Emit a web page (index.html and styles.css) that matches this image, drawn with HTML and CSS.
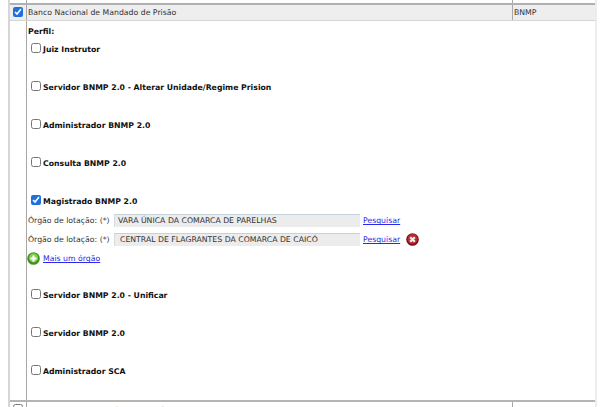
FILE: index.html
```html
<!DOCTYPE html>
<html lang="pt-BR">
<head>
<meta charset="utf-8">
<title>Sistemas</title>
<link rel="stylesheet" href="styles.css">
</head>
<body>
<div class="sheet">
  <div class="row stub">
    <div class="c-check"></div><div class="c-name"></div><div class="c-code"></div>
  </div>
  <div class="row head">
    <div class="c-check"><input type="checkbox" class="head-box" checked></div>
    <div class="c-name">Banco Nacional de Mandado de Prisão</div>
    <div class="c-code">BNMP</div>
  </div>
  <div class="row body">
    <div class="c-check"></div>
    <div class="c-main">
      <div class="perfil">Perfil:</div>
      <label class="item"><input type="checkbox"><span>Juiz Instrutor</span></label>
      <label class="item"><input type="checkbox"><span>Servidor BNMP 2.0 - Alterar Unidade/Regime Prision</span></label>
      <label class="item"><input type="checkbox"><span>Administrador BNMP 2.0</span></label>
      <label class="item"><input type="checkbox"><span>Consulta BNMP 2.0</span></label>
      <label class="item open"><input type="checkbox" checked><span>Magistrado BNMP 2.0</span></label>
      <div class="orgao">
        <span class="lbl">Órgão de lotação: (*)</span>
        <span class="field">VARA ÚNICA DA COMARCA DE PARELHAS</span>
        <a href="#" class="link">Pesquisar</a>
      </div>
      <div class="orgao">
        <span class="lbl">Órgão de lotação: (*)</span>
        <span class="field second">CENTRAL DE FLAGRANTES DA COMARCA DE CAICÓ</span>
        <a href="#" class="link">Pesquisar</a>
        <svg class="del" width="13" height="13" viewBox="0 0 13 13" aria-hidden="true"><circle cx="6.5" cy="6.5" r="6.3" fill="#7d121c"/><circle cx="6.5" cy="6" r="4.9" fill="#c02a34"/><path d="M4.2 4.2l4.6 4.6M8.8 4.2l-4.6 4.6" stroke="#f4f0f0" stroke-width="2.2"/></svg>
      </div>
      <div class="more">
        <svg width="13" height="13" viewBox="0 0 13 13" aria-hidden="true"><circle cx="6.5" cy="6.5" r="6.3" fill="#3f8f1f"/><circle cx="6.5" cy="5.8" r="4.6" fill="#7ed04a"/><path d="M6.5 3.4v6.2M3.4 6.5h6.2" stroke="#fff" stroke-width="2.2"/></svg>
        <a href="#" class="link">Mais um órgão</a>
      </div>
      <label class="item after"><input type="checkbox"><span>Servidor BNMP 2.0 - Unificar</span></label>
      <label class="item"><input type="checkbox"><span>Servidor BNMP 2.0</span></label>
      <label class="item"><input type="checkbox"><span>Administrador SCA</span></label>
    </div>
  </div>
  <div class="row next">
    <div class="c-check"><input type="checkbox" class="head-box"></div>
    <div class="c-name">Banco Nacional de Perícias e Custódia</div>
    <div class="c-code">BNPC</div>
  </div>
</div>
</body>
</html>
```
FILE: styles.css
```css
html, body {
  margin: 0;
  height: 407px;
  overflow: hidden;
  background: #fff;
}
body {
  font-family: "DejaVu Sans", Verdana, sans-serif;
  font-size: 7.75px;
  color: #333;
}
.sheet {
  width: 585px;
  height: 407px;
  margin-left: 8px;
  overflow: hidden;
  border-left: 2px solid #d6d6d6;
  border-right: 2px solid #ececec;
  box-sizing: content-box;
}
.row {
  display: flex;
}
.c-check {
  width: 16px;
  flex: none;
  border-right: 1px solid #a8a8a8;
  display: flex;
  justify-content: center;
}
.c-name {
  width: 486px;
  flex: none;
  padding-left: 1px;
  box-sizing: border-box;
  border-right: 1px solid #a8a8a8;
}
.c-code {
  flex: 1;
  padding-left: 1px;
}
.stub {
  height: 3px;
  border-bottom: 2px solid #b0b0b0;
}
.head {
  height: 15px;
  line-height: 15px;
  background: #eee;
  border-bottom: 1px solid #d4d4d4;
}
.head-box {
  width: 10px;
  height: 10px;
  margin: 2px 0 0;
  accent-color: #1f6fe0;
}
.body {
  height: 379px;
  border-bottom: 2px solid #b4b4b4;
}
.c-main {
  flex: 1;
  padding-left: 1px;
  color: #111;
}
.perfil {
  height: 22px;
  line-height: 21px;
  font-weight: bold;
}
.item {
  display: flex;
  align-items: flex-start;
  height: 37.9px;
  font-weight: bold;
  color: #111;
}
.item input {
  width: 10px;
  height: 10px;
  margin: 0 2px 0 3px;
  accent-color: #1f6fe0;
}
.item span {
  line-height: 13px;
}
.open {
  height: 16.9px;
}
.after {
  margin-top: 20.5px;
}
.orgao {
  display: flex;
  align-items: center;
  height: 19px;
  color: #333;
}
.lbl {
  width: 86px;
  flex: none;
  white-space: nowrap;
}
.field {
  width: 246px;
  height: 13px;
  line-height: 12px;
  padding-left: 3px;
  box-sizing: border-box;
  flex: none;
  background: #ececec;
  border-top: 1px solid #c6d2da;
  border-left: 1px solid #d4dce0;
  color: #333;
  white-space: nowrap;
  overflow: hidden;
}
.second {
  padding-left: 5px;
}
.link {
  color: #2a2ae8;
  margin-left: 3px;
}
.del {
  margin-left: 6px;
}
.more {
  display: flex;
  align-items: center;
  height: 19px;
  margin-left: -1px;
}
.more .link {
  margin-left: 3px;
}
.next {
  height: 5px;
  line-height: 13px;
}
.next .c-name,
.next .c-code {
  padding-top: 2px;
}
```
